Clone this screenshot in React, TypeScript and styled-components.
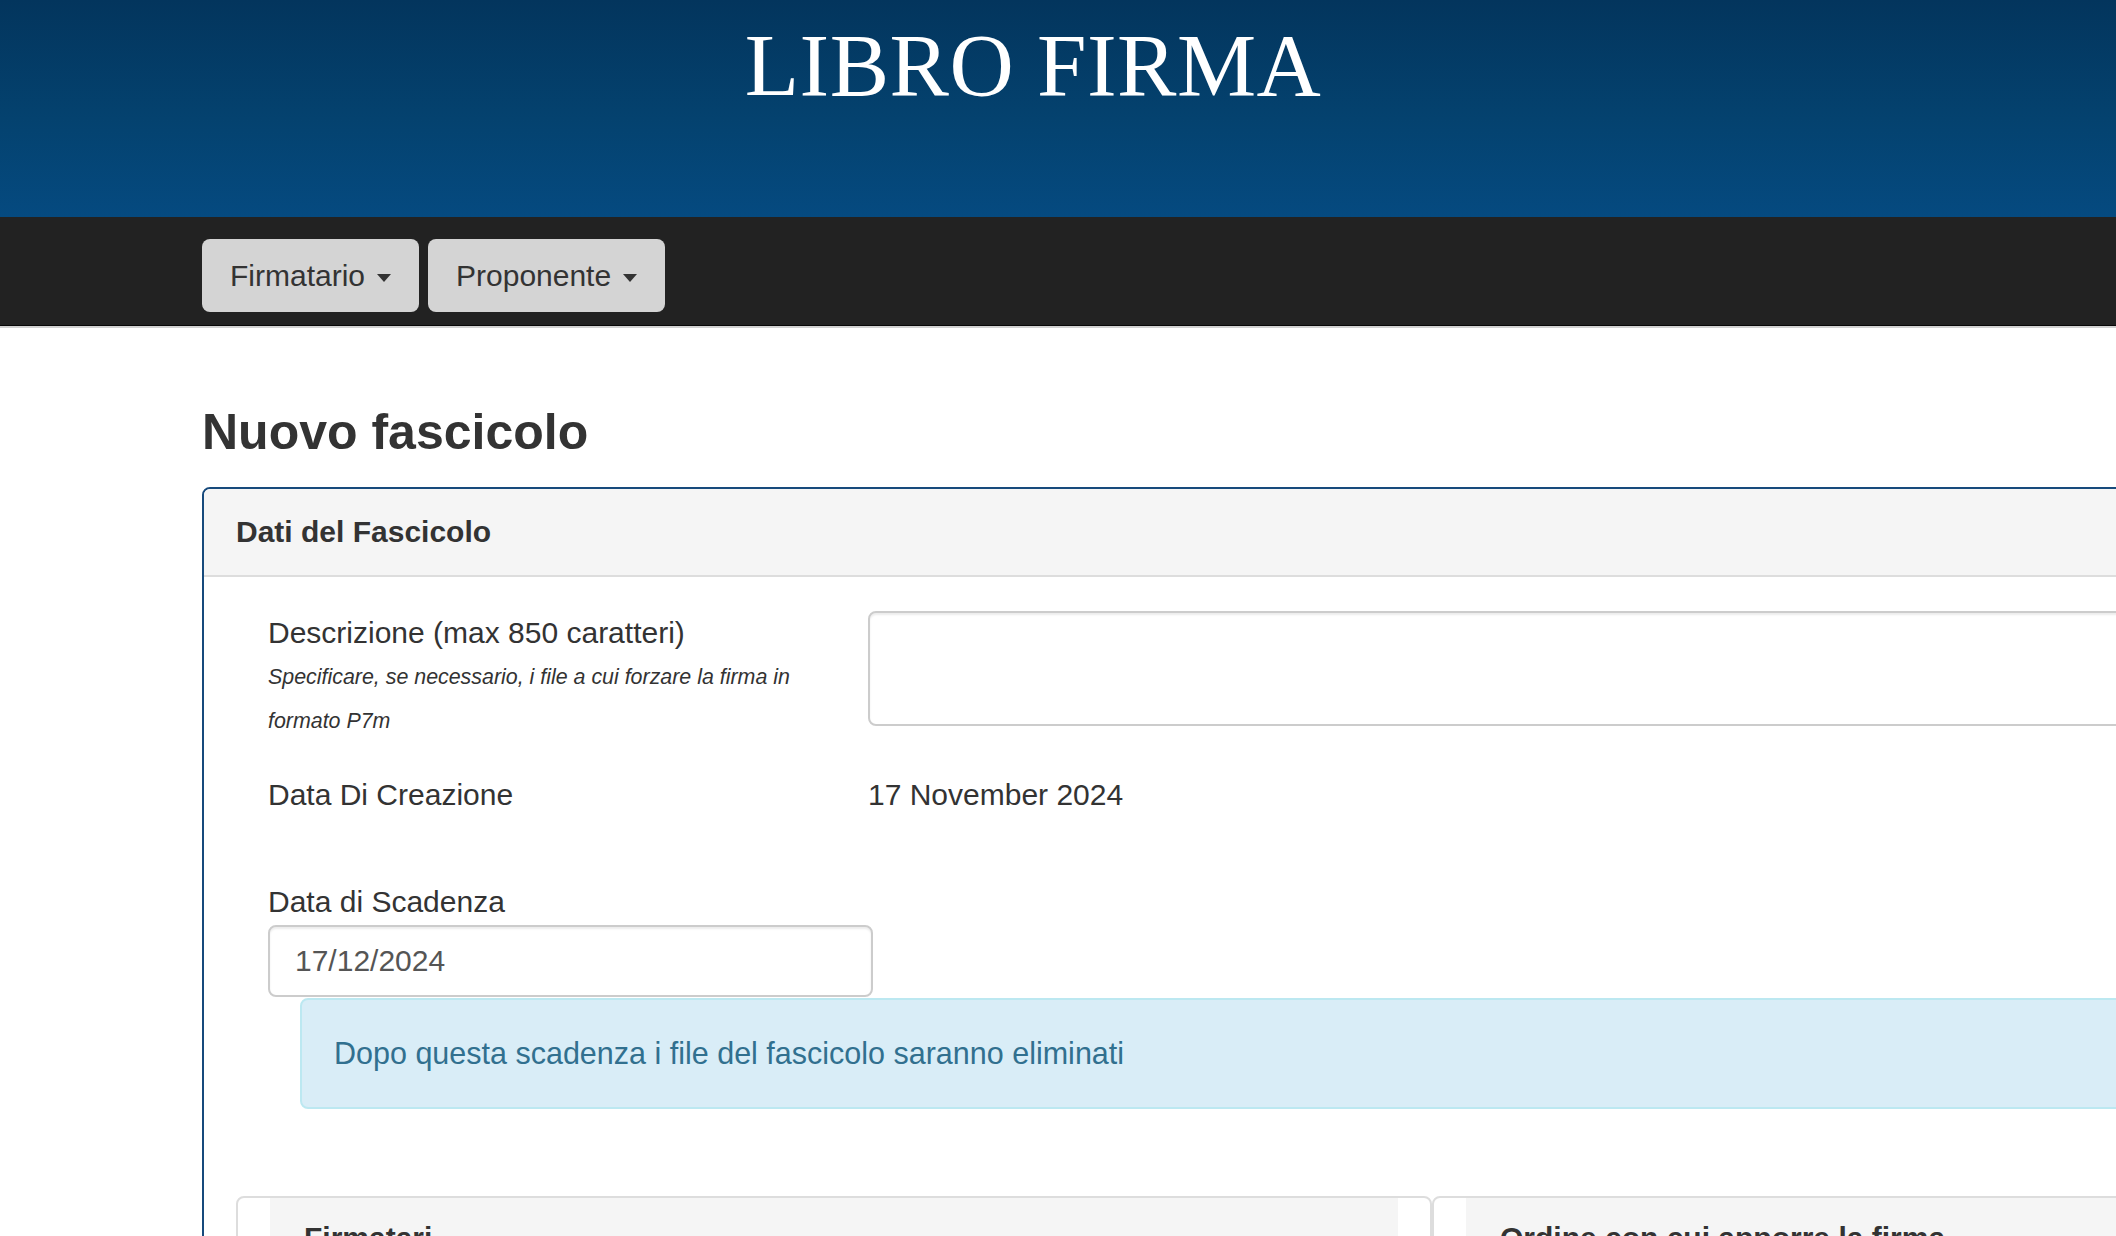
import { createGlobalStyle } from "styled-components";
import styled from "styled-components";

const GlobalStyle = createGlobalStyle`
    html, body {
        margin: 0;
        padding: 0;
        overflow: hidden;
        background: #fff;
    }
    body {
        font-family: "Liberation Sans", Arial, Helvetica, sans-serif;
        color: #333;
    }
    * {
        box-sizing: border-box;
    }
`

const Banner = styled.header`
    height: 217px;
    padding: 21px 50px 0 0;
    background: linear-gradient(180deg, #03355d 0%, #04426f 55%, #054a80 100%);
    text-align: center;
`
const Brand = styled.h1`
    margin: 0;
    font-family: "Liberation Serif", "Times New Roman", serif;
    font-weight: 400;
    font-size: 89px;
    line-height: 88px;
    color: #fff;
    letter-spacing: 0.5px;
`
const NavBar = styled.nav`
    height: 109px;
    padding: 22px 0 0 202px;
    background: #222;
    border-bottom: 1px solid #080808;
    box-shadow: 0 2px 0 #d2d2d2;
    display: flex;
    align-items: flex-start;
    gap: 9px;
`
const NavButton = styled.button`
    height: 73px;
    padding: 0 28px 0 28px;
    border: none;
    border-radius: 8px;
    background: #d4d4d4;
    color: #333;
    font-family: inherit;
    font-size: 30px;
    display: flex;
    align-items: center;
    gap: 12px;
    cursor: pointer;
`
const Caret = styled.span`
    width: 0;
    height: 0;
    margin-top: 4px;
    border-top: 8px solid #333;
    border-left: 7.5px solid transparent;
    border-right: 7.5px solid transparent;
`
const Main = styled.main`
    padding-left: 202px;
    width: 2645px;
`
const PageTitle = styled.h2`
    margin: 79px 0 27px;
    font-size: 50px;
    line-height: 55px;
    font-weight: 700;
    color: #333;
`
const Panel = styled.section`
    border: 2px solid #174a7c;
    border-radius: 8px;
    overflow: hidden;
`
const PanelHeading = styled.div`
    height: 88px;
    padding: 0 32px;
    background: #f5f5f5;
    border-bottom: 2px solid #ddd;
    display: flex;
    align-items: center;
`
const PanelTitle = styled.h3`
    margin: 0;
    font-size: 30px;
    font-weight: 700;
    color: #333;
`
const PanelBody = styled.div`
    padding: 34px 32px 200px;
`
const FormRow = styled.div<{ $gap: number }>`
    display: grid;
    grid-template-columns: 632px 1fr;
    margin-bottom: ${(p) => p.$gap}px;
`
const LabelCell = styled.div`
    padding: 0 32px;
`
const Label = styled.label`
    display: block;
    font-size: 30px;
    line-height: 43px;
    color: #333;
`
const Help = styled.small`
    display: block;
    margin-top: 1px;
    font-size: 21.4px;
    line-height: 44px;
    font-style: italic;
    color: #333;
`
const TextArea = styled.textarea`
    display: block;
    width: 100%;
    height: 115px;
    border: 2px solid #ccc;
    border-radius: 8px;
    box-shadow: inset 0 2px 2px rgba(0, 0, 0, 0.075);
    resize: none;
    font-family: inherit;
    font-size: 30px;
`
const StaticValue = styled.div`
    font-size: 30px;
    line-height: 43px;
    color: #333;
`
const DateGroup = styled.div`
    padding-left: 32px;
    margin-bottom: 87px;
`
const DateInput = styled.input`
    display: block;
    width: 605px;
    height: 72px;
    margin-top: 2px;
    padding: 0 25px;
    border: 2px solid #ccc;
    border-radius: 8px;
    box-shadow: inset 0 2px 2px rgba(0, 0, 0, 0.075);
    font-family: inherit;
    font-size: 30px;
    color: #555;
    outline: none;
`
const InfoAlert = styled.div`
    margin: 1px 0 0 32px;
    padding: 32px 32px;
    background: #d9edf7;
    border: 2px solid #bce8f1;
    border-radius: 8px;
    color: #31708f;
    font-size: 30.5px;
    line-height: 43px;
`
const CardsRow = styled.div`
    display: grid;
    grid-template-columns: 1196px 1fr;
`
const Card = styled.div`
    min-height: 300px;
    padding: 0 32px;
    border: 2px solid #ddd;
    border-radius: 8px;
    background: #fff;
`
const CardHeading = styled.div`
    padding: 18px 34px;
    background: #f5f5f5;
`
const CardTitle = styled.h4`
    margin: 0;
    font-size: 30px;
    line-height: 43px;
    font-weight: 700;
    color: #333;
`

function App() {
    return (
        <>
            <GlobalStyle />
            <Banner>
                <Brand>LIBRO FIRMA</Brand>
            </Banner>
            <NavBar>
                <NavButton>
                    Firmatario <Caret />
                </NavButton>
                <NavButton>
                    Proponente <Caret />
                </NavButton>
            </NavBar>
            <Main>
                <PageTitle>Nuovo fascicolo</PageTitle>
                <Panel>
                    <PanelHeading>
                        <PanelTitle>Dati del Fascicolo</PanelTitle>
                    </PanelHeading>
                    <PanelBody>
                        <FormRow $gap={30}>
                            <LabelCell>
                                <Label>Descrizione (max 850 caratteri)</Label>
                                <Help>
                                    Specificare, se necessario, i file a cui forzare la firma in
                                    formato P7m
                                </Help>
                            </LabelCell>
                            <div>
                                <TextArea />
                            </div>
                        </FormRow>
                        <FormRow $gap={64}>
                            <LabelCell>
                                <Label>Data Di Creazione</Label>
                            </LabelCell>
                            <StaticValue>17 November 2024</StaticValue>
                        </FormRow>
                        <DateGroup>
                            <Label>Data di Scadenza</Label>
                            <DateInput defaultValue="17/12/2024" />
                            <InfoAlert>
                                Dopo questa scadenza i file del fascicolo saranno eliminati
                            </InfoAlert>
                        </DateGroup>
                        <CardsRow>
                            <Card>
                                <CardHeading>
                                    <CardTitle>Firmatari</CardTitle>
                                </CardHeading>
                            </Card>
                            <Card>
                                <CardHeading>
                                    <CardTitle>Ordine con cui apporre la firma</CardTitle>
                                </CardHeading>
                            </Card>
                        </CardsRow>
                    </PanelBody>
                </Panel>
            </Main>
        </>
    );
}

export default App;
